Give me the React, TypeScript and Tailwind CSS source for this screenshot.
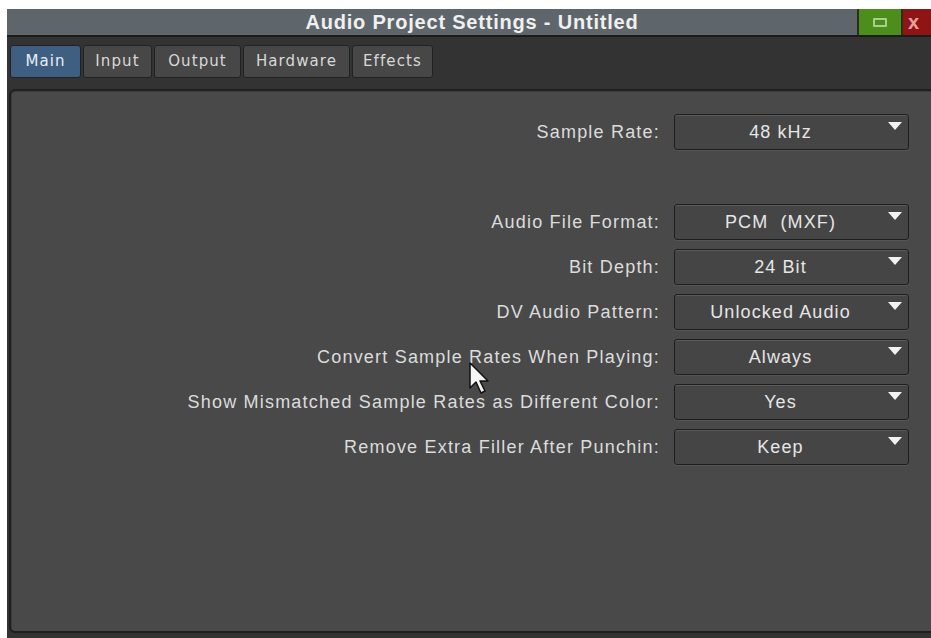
import React from "react";

const rows: { label: string; value: string }[] = [
  { label: "Audio File Format:", value: "PCM  (MXF)" },
  { label: "Bit Depth:", value: "24 Bit" },
  { label: "DV Audio Pattern:", value: "Unlocked Audio" },
  { label: "Convert Sample Rates When Playing:", value: "Always" },
  { label: "Show Mismatched Sample Rates as Different Color:", value: "Yes" },
  { label: "Remove Extra Filler After Punchin:", value: "Keep" },
];

const tabs = ["Main", "Input", "Output", "Hardware", "Effects"];
const tabWidths = ["w-[71px]", "w-[69px]", "w-[87px]", "w-[107px]", "w-[81px]"];

function Dropdown({ value }: { value: string }) {
  return (
    <div className="relative flex h-[36px] w-[235px] items-center justify-center rounded-[3px] border border-[#1e1e1e] bg-[#454545] pr-[22px] shadow-[inset_0_1px_0_#5a5a5a,0_1px_0_#555]">
      <span className="text-[18px] tracking-[1.1px] text-[#e6e6e6] whitespace-pre">{value}</span>
      <svg className="absolute right-[6px] top-[7px]" width="14" height="9" viewBox="0 0 14 9">
        <path d="M0 0 H14 L7 8 Z" fill="#f2f2f2" />
      </svg>
    </div>
  );
}

function Row({ label, value }: { label: string; value: string }) {
  return (
    <div className="flex items-center justify-end gap-[14px]">
      <span className="text-[18px] tracking-[1.2px] text-[#dcdcdc]">{label}</span>
      <Dropdown value={value} />
    </div>
  );
}

export default function App() {
  return (
    <div
      className="relative h-[638px] w-[931px] overflow-hidden bg-white pl-[7px] pt-[9px]"
      style={{ fontFamily: '"Liberation Sans", Arial, sans-serif' }}
    >
      <div className="flex h-[629px] flex-col bg-[#333333]">
        {/* title bar */}
        <div className="flex h-[28px] shrink-0 border-b-[2px] border-[#1c1c1c]">
          <div className="flex flex-1 items-center justify-center bg-[#5f666b] pl-[80px] text-[20px] font-bold tracking-[0.8px] text-[#f0f0f0]">
            Audio Project Settings - Untitled
          </div>
          <div className="flex w-[46px] items-center justify-center border-x-[2px] border-[#2a2f1c] bg-[#4d8d1c]">
            <div className="h-[9px] w-[14px] rounded-[1px] border-[2px] border-[#a9cf88]" />
          </div>
          <div className="flex w-[28px] items-center justify-start bg-[#8f1414] pl-[5px] text-[20px] font-bold text-[#e7a0a0]">
            x
          </div>
        </div>

        {/* tabs */}
        <div className="flex h-[52px] shrink-0 items-start gap-[2px] pl-[3px] pt-[8px]" style={{ fontFamily: '"DejaVu Sans", Verdana, sans-serif' }}>
          {tabs.map((t, i) => (
            <div
              key={t}
              className={`flex h-[33px] items-center justify-center rounded-[3px] border border-[#222] text-[15px] tracking-[1.1px] ${tabWidths[i]} ${
                i === 0 ? "bg-[#3f5f82] text-[#e8eef5]" : "bg-[#474747] text-[#d8d8d8]"
              }`}
            >
              {t}
            </div>
          ))}
        </div>

        {/* panel */}
        <div className="ml-[2px] mr-[-10px] flex flex-1 flex-col rounded-[6px] border-[2px] border-[#1f1f1f] bg-[#494949] pr-[30px] pt-[23px] shadow-[inset_1px_1px_0_#3c3c3c]">
          <Row label="Sample Rate:" value="48 kHz" />
          <div className="mt-[54px] flex flex-col gap-[9px]">
            {rows.map((r) => (
              <Row key={r.label} label={r.label} value={r.value} />
            ))}
          </div>
        </div>
        <div className="h-[5px] shrink-0" />
      </div>

      {/* mouse pointer */}
      <svg className="absolute left-[469px] top-[362px]" width="24" height="34" viewBox="0 0 24 34">
        <path d="M1 1 L1 26 L7 20 L12 31 L16 29 L11 19 L19 19 Z" fill="#f4f4f4" stroke="#111" strokeWidth="1.5" strokeLinejoin="round" />
      </svg>
    </div>
  );
}
